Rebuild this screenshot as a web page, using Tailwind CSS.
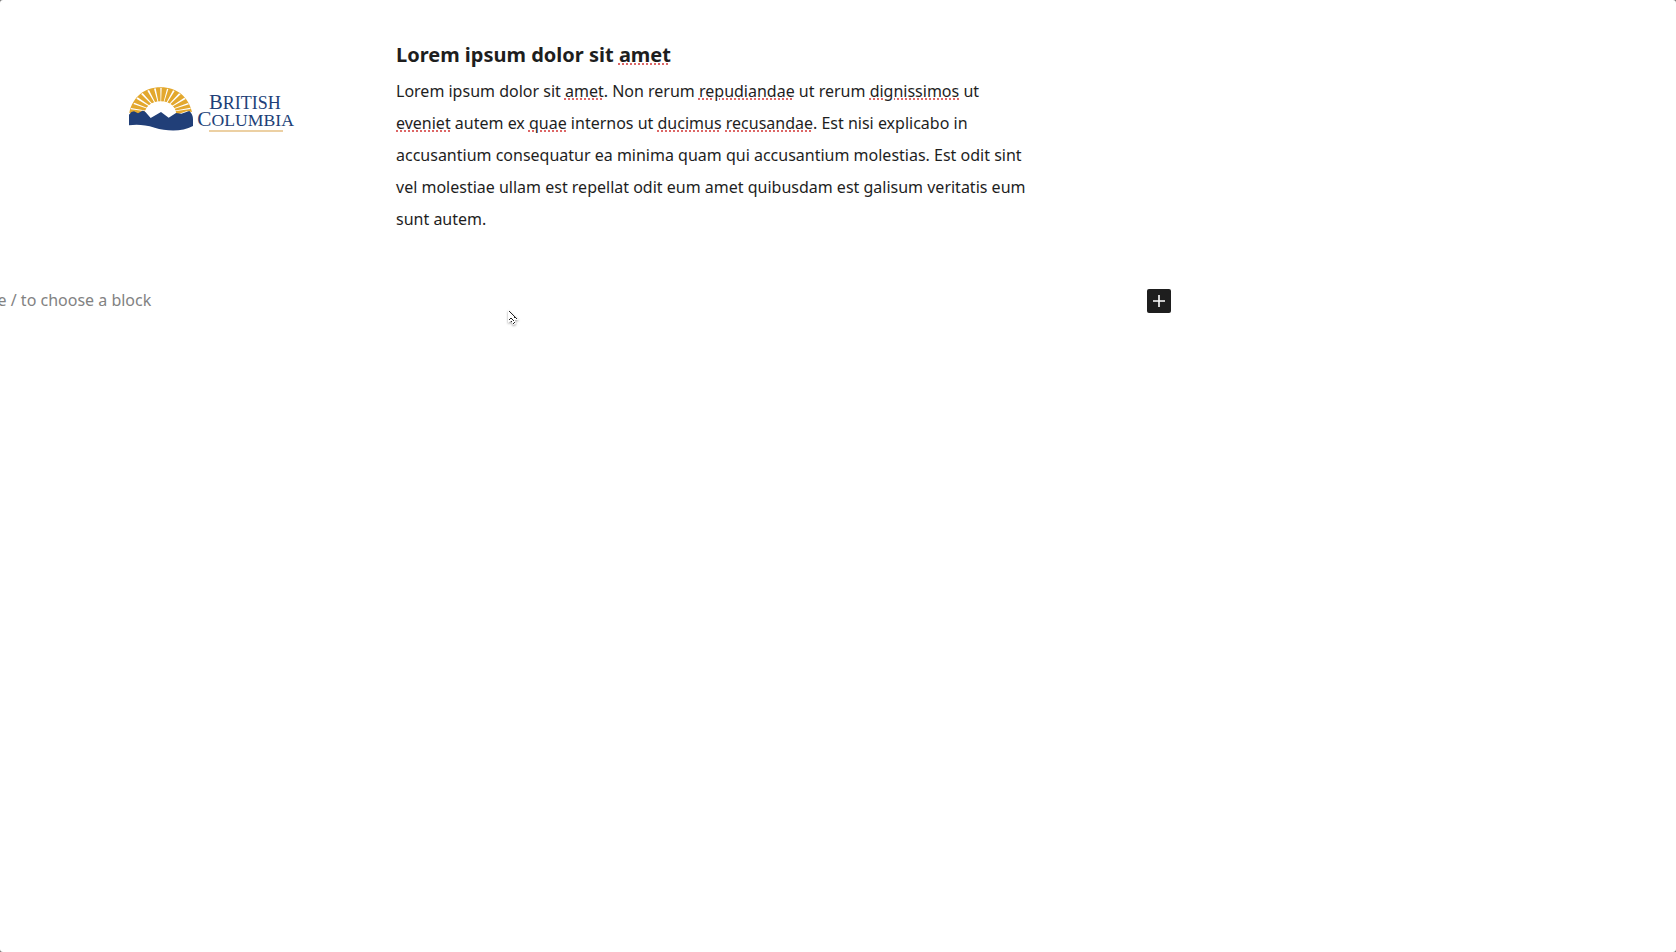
<!DOCTYPE html>
<html lang="en" class="bg-[#777777]">
<head>
<meta charset="utf-8">
<title>Block editor</title>
<script src="https://cdn.jsdelivr.net/npm/@tailwindcss/browser@4"></script>
</head>
<body class="relative min-h-screen overflow-x-hidden rounded-[3px] bg-white font-['Noto_Sans',sans-serif] text-base leading-8 text-[#1e1e1e]">
<main class="max-w-[1171px] pt-9">
  <section class="flex items-start pl-[120px]">
    <figure class="mt-11 w-[180px] shrink-0">
      <svg class="block w-full" viewBox="0 0 540 180" role="img" aria-label="British Columbia">
        <path d="M28 98C38 52 72 22 122 22s84 30 94 74l-17-2-30 10-120 4z" fill="#e3a82e"/>
        <path d="M122 100 40 72l3-4zM122 100 49 56l4-4zM122 100 63 42l5-3zM122 100 82 32l5-2zM122 100 102 26l5-1zM122 100 121 24h4zM122 100 141 26l4 1zM122 100 159 31l5 2zM122 100 177 40l5 3zM122 100 193 53l4 4zM122 100 204 69l3 4zM122 100 32 88l1-4zM122 100 211 83l1 4z" fill="#fff"/>
        <path d="M72 112C72 80 94 64 122 64s48 16 48 48z" fill="#fff"/>
        <path d="M27 104Q34 94 42 94L54 100 66 93Q72 91 77 97L92 114 123 96 146 113 168 99 184 101 208 93Q219 103 219 118V138C186 156 140 154 104 143 74 134 50 133 27 136z" fill="#213f78"/>
        <g fill="#213f78" font-family="Liberation Serif, serif">
          <text x="267" y="88" font-size="62">B<tspan font-size="54">RITISH</tspan></text>
          <text x="232" y="137" font-size="64">C<tspan font-size="53">OLUMBIA</tspan></text>
        </g>
        <path d="M267 153h222" stroke="#e6c084" stroke-width="5"/>
      </svg>
    </figure>
    <div class="ml-24 max-w-[640px]">
      <h2 class="mb-px text-[20px] font-bold leading-[38px]">Lorem ipsum dolor sit <span class="underline decoration-[#dd6666] decoration-dotted decoration-2 underline-offset-1">amet</span></h2>
      <p>Lorem ipsum dolor sit <span class="underline decoration-[#dd6666] decoration-dotted decoration-2 underline-offset-1">amet</span>. Non rerum <span class="underline decoration-[#dd6666] decoration-dotted decoration-2 underline-offset-1">repudiandae</span> ut rerum <span class="underline decoration-[#dd6666] decoration-dotted decoration-2 underline-offset-1">dignissimos</span> ut<br><span class="underline decoration-[#dd6666] decoration-dotted decoration-2 underline-offset-1">eveniet</span> autem ex <span class="underline decoration-[#dd6666] decoration-dotted decoration-2 underline-offset-1">quae</span> internos ut <span class="underline decoration-[#dd6666] decoration-dotted decoration-2 underline-offset-1">ducimus</span> <span class="underline decoration-[#dd6666] decoration-dotted decoration-2 underline-offset-1">recusandae</span>. Est nisi explicabo in<br>accusantium consequatur ea minima quam qui accusantium molestias. Est odit sint vel molestiae ullam est repellat odit eum amet quibusdam est galisum veritatis eum sunt autem.</p>
    </div>
  </section>
  <div class="mt-[50px] flex items-center">
    <input type="text" aria-label="Empty block" placeholder="Type / to choose a block" class="-ml-[29px] h-8 min-w-0 flex-1 pb-0.5 outline-none placeholder:text-[#828282]">
    <button type="button" aria-label="Add block" class="flex size-6 items-center justify-center rounded-xs bg-[#1e1e1e] text-white">
      <svg class="size-6" viewBox="0 0 24 24" fill="none" stroke="currentColor" stroke-width="1.6" aria-hidden="true"><path d="M12 6v12M6 12h12"/></svg>
    </button>
  </div>
</main>
<svg class="pointer-events-none absolute left-[507px] top-[310px] h-[18px] w-3 drop-shadow-[0_1px_1px_#00000066]" viewBox="0 0 12 18" aria-hidden="true">
  <path d="M1 0v13l3-2 2 4 3-1-1-4h4z" fill="#fff"/>
  <path d="M2 1h1v1H2zM3 2h1v1H3zM4 3h1v1H4zM5 4h1v1H5zM6 5h1v1H6zM7 6h1v1H7zM8 7h1v1H8zM9 8h1v1H9zM7 7h1v1H7zM2 9h1v1H2zM4 8h1v1H4zM3 8h1v1H3zM5 9h1v1H5zM6 10h1v1H6zM4 11h1v1H4zM7 12h1v1H7zM6 13h1v1H6z" fill="#222"/>
</svg>
</body>
</html>
